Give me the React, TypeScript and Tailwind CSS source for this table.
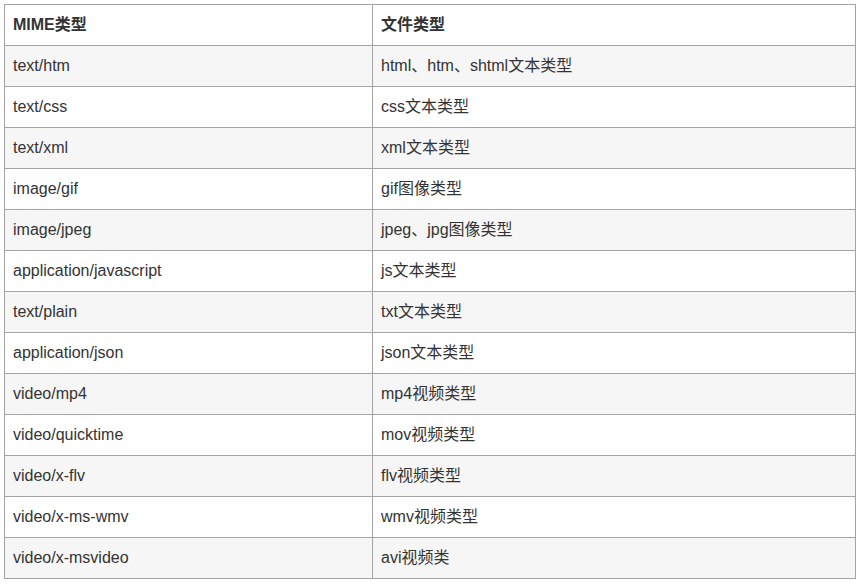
const rows: [string, string][] = [
  ["text/htm", "html、htm、shtml文本类型"],
  ["text/css", "css文本类型"],
  ["text/xml", "xml文本类型"],
  ["image/gif", "gif图像类型"],
  ["image/jpeg", "jpeg、jpg图像类型"],
  ["application/javascript", "js文本类型"],
  ["text/plain", "txt文本类型"],
  ["application/json", "json文本类型"],
  ["video/mp4", "mp4视频类型"],
  ["video/quicktime", "mov视频类型"],
  ["video/x-flv", "flv视频类型"],
  ["video/x-ms-wmv", "wmv视频类型"],
  ["video/x-msvideo", "avi视频类"],
];

export default function App() {
  return (
    <div className="w-[861px] h-[584px] bg-white pt-1 pl-1 font-['Liberation_Sans','Noto_Sans_CJK_SC',sans-serif] text-[16px] text-[#333]">
      <table className="w-[852px] border-collapse">
        <thead>
          <tr className="h-[41px]">
            <th className="w-[368px] border border-[#a3a3a3] px-2 text-left font-bold">MIME类型</th>
            <th className="border border-[#a3a3a3] px-2 text-left font-bold">文件类型</th>
          </tr>
        </thead>
        <tbody>
          {rows.map(([mime, desc], i) => (
            <tr key={mime} className={`h-[41px] ${i % 2 === 0 ? "bg-[#f6f6f6]" : "bg-white"}`}>
              <td className="border border-[#a3a3a3] px-2">{mime}</td>
              <td className="border border-[#a3a3a3] px-2">{desc}</td>
            </tr>
          ))}
        </tbody>
      </table>
    </div>
  );
}
